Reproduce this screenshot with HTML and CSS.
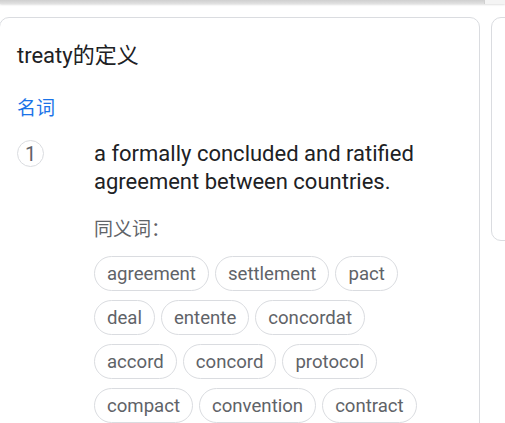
FILE: index.html
```html
<!DOCTYPE html>
<html lang="zh">
<head>
<meta charset="utf-8">
<link rel="stylesheet" href="styles.css">
</head>
<body>
<div class="topbar"><div class="bar-main"></div><div class="bar-corner"></div></div>
<div class="cards">
  <div class="card">
    <h1 class="title">treaty的定义</h1>
    <div class="pos">名词</div>
    <div class="sense">
      <div class="num">1</div>
      <div class="sense-body">
        <div class="def">a formally concluded and ratified agreement between countries.</div>
        <div class="syn-label">同义词：</div>
        <div class="chips">
          <span class="chip">agreement</span>
          <span class="chip">settlement</span>
          <span class="chip">pact</span>
          <span class="chip">deal</span>
          <span class="chip">entente</span>
          <span class="chip">concordat</span>
          <span class="chip">accord</span>
          <span class="chip">concord</span>
          <span class="chip">protocol</span>
          <span class="chip">compact</span>
          <span class="chip">convention</span>
          <span class="chip">contract</span>
        </div>
      </div>
    </div>
  </div>
  <div class="side"></div>
</div>
</body>
</html>
```
FILE: styles.css
```css
html, body {
  margin: 0;
  padding: 0;
  background: #fff;
  overflow: hidden;
}
body {
  font-family: Roboto, "Noto Sans CJK SC", sans-serif;
  color: #202124;
}
.topbar {
  display: flex;
  height: 4px;
  box-shadow: 0 1px 2px rgba(0, 0, 0, 0.12);
}
.bar-main {
  flex: 1;
  background: linear-gradient(#cfcfcf, #e2e2e2);
}
.bar-corner {
  width: 20px;
  background: #f4f4f4;
  border-left: 1px solid #d0d0d0;
}
.cards {
  display: flex;
  gap: 11px;
  margin-top: 13px;
  margin-left: -1px;
}
.card {
  flex: none;
  width: 481px;
  height: 560px;
  border: 1px solid #dadce0;
  border-radius: 10px;
  box-sizing: border-box;
  padding: 24px 17px 0 17px;
}
.side {
  flex: none;
  width: 40px;
  height: 224px;
  border: 1px solid #dadce0;
  border-radius: 10px;
  box-sizing: border-box;
}
.title {
  margin: 0;
  font-size: 22px;
  font-weight: 400;
  line-height: 28px;
  color: #202124;
}
.pos {
  margin-top: 27px;
  font-size: 19px;
  line-height: 24px;
  color: #1a73e8;
}
.sense {
  display: flex;
  margin-top: 19px;
}
.num {
  flex: none;
  width: 27px;
  height: 27px;
  border: 1px solid #dadce0;
  border-radius: 50%;
  box-sizing: border-box;
  display: flex;
  align-items: center;
  justify-content: center;
  font-size: 20px;
  color: #5f6368;
}
.sense-body {
  margin-left: 50px;
}
.def {
  font-size: 22px;
  line-height: 28px;
  color: #202124;
  width: 340px;
}
.syn-label {
  margin-top: 22px;
  font-size: 19px;
  line-height: 24px;
  color: #5f6368;
}
.chips {
  display: flex;
  flex-wrap: wrap;
  gap: 9px 6px;
  margin-top: 14px;
  width: 340px;
}
.chip {
  display: inline-flex;
  align-items: center;
  height: 35px;
  box-sizing: border-box;
  padding: 0 12px;
  border: 1px solid #dadce0;
  border-radius: 18px;
  font-size: 18.6px;
  color: #5f6368;
}
```
